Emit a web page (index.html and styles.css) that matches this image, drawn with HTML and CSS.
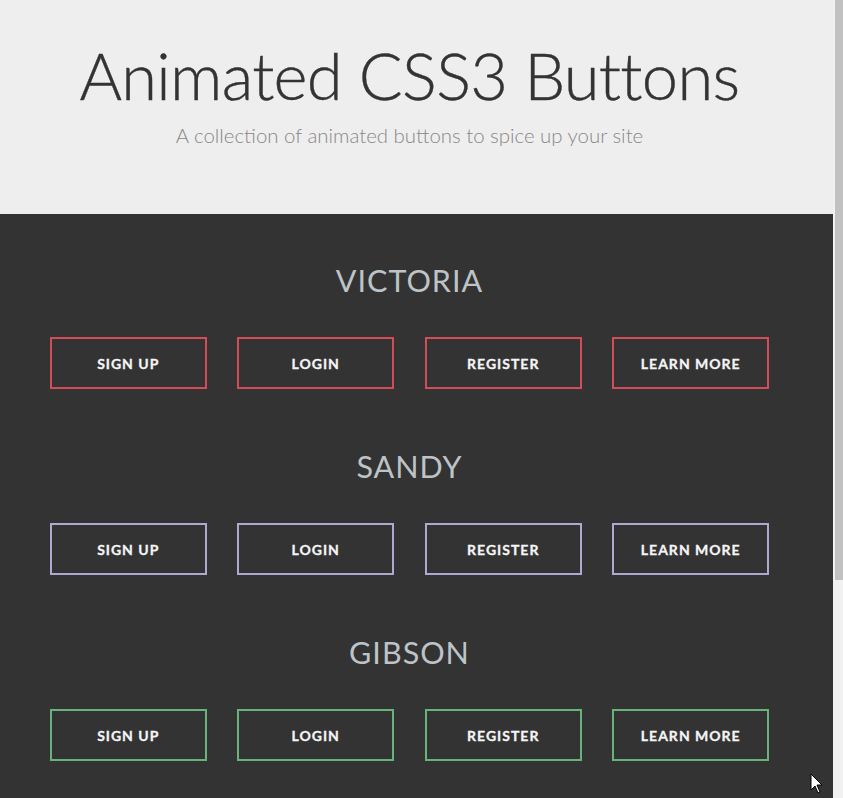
FILE: index.html
```html
<!DOCTYPE html>
<html>
<head>
<meta charset="utf-8">
<title>Animated CSS3 Buttons</title>
<link rel="stylesheet" href="styles.css">
</head>
<body>
<div class="page">
  <header class="hero">
    <div class="inner">
      <h1 class="title">Animated CSS3 Buttons</h1>
      <p class="subtitle">A collection of animated buttons to spice up your site</p>
    </div>
  </header>
  <main class="demos">
    <div class="inner">
      <section class="set victoria">
        <h2 class="set-name">VICTORIA</h2>
        <div class="row">
          <div class="cell"><a class="btn">Sign up</a></div>
          <div class="cell"><a class="btn">Login</a></div>
          <div class="cell"><a class="btn">Register</a></div>
          <div class="cell"><a class="btn">Learn more</a></div>
        </div>
      </section>
      <section class="set sandy">
        <h2 class="set-name">SANDY</h2>
        <div class="row">
          <div class="cell"><a class="btn">Sign up</a></div>
          <div class="cell"><a class="btn">Login</a></div>
          <div class="cell"><a class="btn">Register</a></div>
          <div class="cell"><a class="btn">Learn more</a></div>
        </div>
      </section>
      <section class="set gibson">
        <h2 class="set-name">GIBSON</h2>
        <div class="row">
          <div class="cell"><a class="btn">Sign up</a></div>
          <div class="cell"><a class="btn">Login</a></div>
          <div class="cell"><a class="btn">Register</a></div>
          <div class="cell"><a class="btn">Learn more</a></div>
        </div>
      </section>
    </div>
  </main>
</div>
<div class="scrollbar"><div class="thumb"></div></div>
<svg class="cursor" width="14" height="22" viewBox="0 0 14 22"><path d="M1 1 L1 17 L5 13 L8 20 L10 19 L7 12 L12 12 Z" fill="#fff" stroke="#000" stroke-width="1"/></svg>
</body>
</html>
```
FILE: styles.css
```css
html, body {
  margin: 0;
  padding: 0;
  background: #333333;
  font-family: "Lato", "Open Sans", sans-serif;
  overflow: hidden;
  height: 798px;
}

.page {
  width: 833px;
  height: 798px;
  overflow: hidden;
  background: #333333;
}

.inner {
  width: 819px;
}

.hero {
  background: #eeeeee;
  height: 214px;
  box-sizing: border-box;
  padding-top: 43px;
}

.title {
  margin: 0;
  font-size: 65px;
  line-height: 65px;
  font-weight: 300;
  letter-spacing: -0.7px;
  color: #333333;
  text-align: center;
  -webkit-text-stroke: 0.4px #333333;
}

.subtitle {
  margin: 17px 0 0;
  font-size: 20.4px;
  line-height: 20px;
  font-weight: 300;
  color: #888888;
  text-align: center;
}

.demos {
  padding-top: 51px;
}

.set {
  display: flex;
  flex-direction: column;
  align-items: center;
  margin-bottom: 62px;
}

.set-name {
  margin: 0 0 42px;
  font-size: 30.5px;
  line-height: 30px;
  height: 30px;
  font-weight: 400;
  color: #bdc3c7;
  letter-spacing: 1px;
}

.row {
  width: 750px;
  display: grid;
  grid-template-columns: repeat(4, 1fr);
}

.cell {
  display: flex;
  justify-content: center;
}

.btn {
  width: 157px;
  height: 52px;
  box-sizing: border-box;
  border: 2px solid;
  display: flex;
  align-items: center;
  justify-content: center;
  color: #f5f5f5;
  font-size: 14px;
  font-weight: 700;
  text-transform: uppercase;
  letter-spacing: 1px;
  -webkit-text-stroke: 0.3px #f5f5f5;
}

.victoria .btn { border-color: #d24d57; }
.sandy .btn { border-color: #aea8d3; }
.gibson .btn { border-color: #66b47b; }

.scrollbar {
  position: fixed;
  top: 0;
  right: 0;
  width: 10px;
  height: 798px;
  background: #f1f1f1;
}

.thumb {
  margin-left: 2px;
  width: 8px;
  height: 580px;
  background: #c1c1c1;
}

.cursor {
  position: fixed;
  left: 810px;
  top: 773px;
}
```
